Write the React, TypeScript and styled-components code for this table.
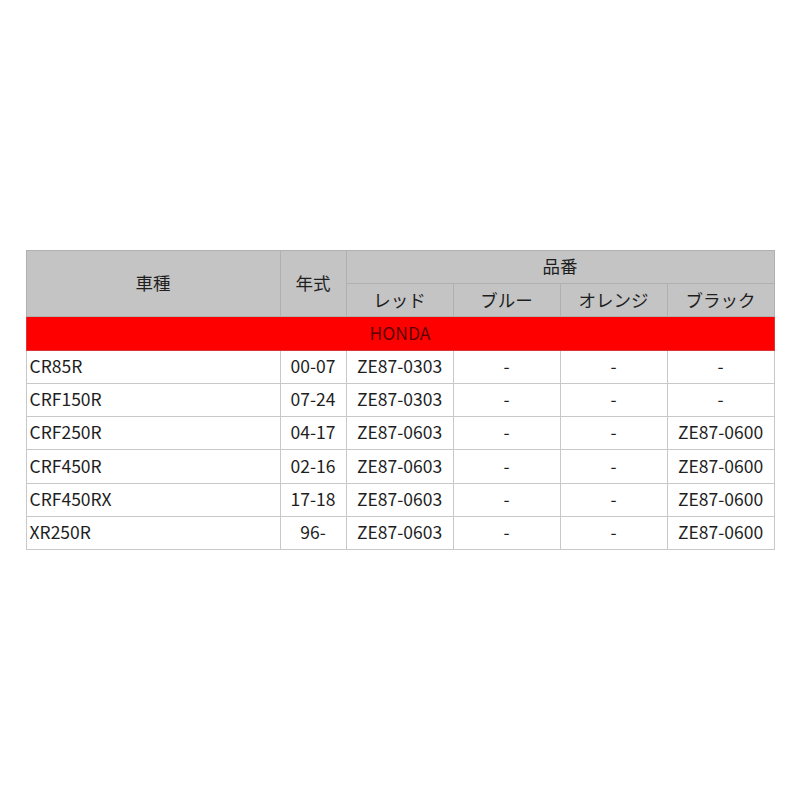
import styled, { createGlobalStyle } from "styled-components";

const rows = [
  { model: "CR85R", year: "00-07", red: "ZE87-0303", blue: "-", orange: "-", black: "-" },
  { model: "CRF150R", year: "07-24", red: "ZE87-0303", blue: "-", orange: "-", black: "-" },
  { model: "CRF250R", year: "04-17", red: "ZE87-0603", blue: "-", orange: "-", black: "ZE87-0600" },
  { model: "CRF450R", year: "02-16", red: "ZE87-0603", blue: "-", orange: "-", black: "ZE87-0600" },
  { model: "CRF450RX", year: "17-18", red: "ZE87-0603", blue: "-", orange: "-", black: "ZE87-0600" },
  { model: "XR250R", year: "96-", red: "ZE87-0603", blue: "-", orange: "-", black: "ZE87-0600" },
];

export default function App() {
  return (
    <>
      <GlobalStyle />
      <Page>
        <Table>
          <colgroup>
            <col style={{ width: 254 }} />
            <col style={{ width: 66 }} />
            <col style={{ width: 107 }} />
            <col style={{ width: 107 }} />
            <col style={{ width: 107 }} />
            <col style={{ width: 107 }} />
          </colgroup>
          <thead>
            <tr>
              <Th rowSpan={2}>車種</Th>
              <Th rowSpan={2}>年式</Th>
              <Th colSpan={4}>品番</Th>
            </tr>
            <tr>
              <Th>レッド</Th>
              <Th>ブルー</Th>
              <Th>オレンジ</Th>
              <Th>ブラック</Th>
            </tr>
          </thead>
          <tbody>
            <tr>
              <Maker colSpan={6}>HONDA</Maker>
            </tr>
            {rows.map((r) => (
              <tr key={r.model}>
                <Td $left>{r.model}</Td>
                <Td>{r.year}</Td>
                <Td>{r.red}</Td>
                <Td>{r.blue}</Td>
                <Td>{r.orange}</Td>
                <Td>{r.black}</Td>
              </tr>
            ))}
          </tbody>
        </Table>
      </Page>
    </>
  );
}

const GlobalStyle = createGlobalStyle`
  body {
    margin: 0;
    background: #fff;
    font-family: "Noto Sans CJK JP", "Noto Sans", sans-serif;
  }
`;

const Page = styled.div`
  width: 800px;
  height: 800px;
  display: flex;
  align-items: center;
  justify-content: center;
`;

const Table = styled.table`
  width: 748px;
  border-collapse: collapse;
  table-layout: fixed;
  font-size: 17.5px;
  line-height: 1.2;
  color: #1e1e1e;
`;

const Th = styled.th`
  box-sizing: border-box;
  height: 33.3px;
  padding: 0 0 2px;
  background: #c4c4c4;
  border: 1px solid #b0b0b0;
  font-weight: 400;
  text-align: center;
  color: #1e1e1e;
`;

const Maker = styled.td`
  box-sizing: border-box;
  height: 33.3px;
  padding: 0 0 2px;
  background: #ff0000;
  border: 1px solid #d33;
  color: #5a0000;
  text-align: center;
`;

const Td = styled.td<{ $left?: boolean }>`
  box-sizing: border-box;
  height: 33.3px;
  padding: 0 3px 3px;
  border: 1px solid #c8c8c8;
  text-align: ${(p) => (p.$left ? "left" : "center")};
  background: #fff;
`;
